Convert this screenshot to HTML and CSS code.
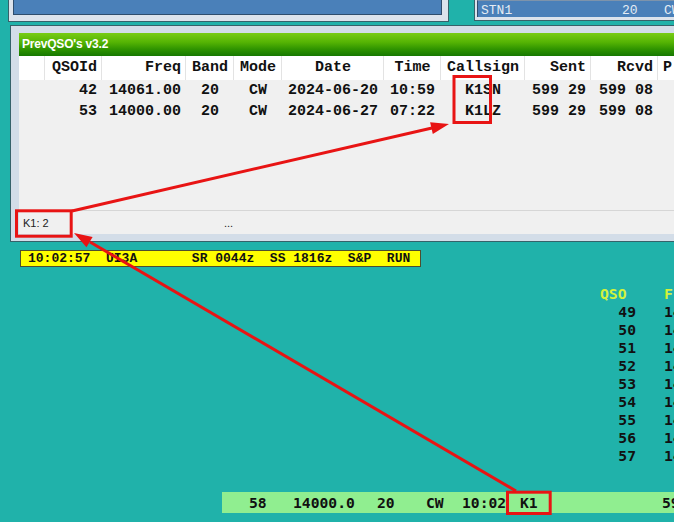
FILE: index.html
```html
<!DOCTYPE html>
<html>
<head>
<meta charset="utf-8">
<link rel="stylesheet" href="styles.css">
</head>
<body>
<div class="top">
  <div class="win-tl"><div class="win-tl-inner"></div></div>
  <div class="win-tr"><div class="win-tr-inner"><span class="tr1">STN1</span><span class="tr2">20</span><span>CW</span></div></div>
</div>
<div class="prev">
  <div class="title">PrevQSO's v3.2</div>
  <div class="content">
    <div class="grid hdr">
      <div class="c"></div>
      <div class="c r">QSOId</div>
      <div class="c r">Freq</div>
      <div class="c m">Band</div>
      <div class="c m">Mode</div>
      <div class="c m">Date</div>
      <div class="c m">Time</div>
      <div class="c m">Callsign</div>
      <div class="c r">Sent</div>
      <div class="c r">Rcvd</div>
      <div class="c l">P</div>
    </div>
    <div class="grid row">
      <div class="c"></div>
      <div class="c r">42</div>
      <div class="c r">14061.00</div>
      <div class="c m">20</div>
      <div class="c m">CW</div>
      <div class="c m">2024-06-20</div>
      <div class="c m">10:59</div>
      <div class="c m">K1SN</div>
      <div class="c r">599 29</div>
      <div class="c r">599 08</div>
      <div class="c l"></div>
    </div>
    <div class="grid row">
      <div class="c"></div>
      <div class="c r">53</div>
      <div class="c r">14000.00</div>
      <div class="c m">20</div>
      <div class="c m">CW</div>
      <div class="c m">2024-06-27</div>
      <div class="c m">07:22</div>
      <div class="c m">K1LZ</div>
      <div class="c r">599 29</div>
      <div class="c r">599 08</div>
      <div class="c l"></div>
    </div>
    <div class="fill"></div>
    <div class="status"><span class="st1">K1: 2</span><span class="st2">...</span></div>
  </div>
</div>
<div class="ybar">10:02:57  UI3A       SR 0044z  SS 1816z  S&amp;P  RUN</div>
<div class="list">
  <div class="lh">QSO</div><div class="lh2">F</div>
  <div class="ln">49</div><div class="lf">14</div>
  <div class="ln">50</div><div class="lf">14</div>
  <div class="ln">51</div><div class="lf">14</div>
  <div class="ln">52</div><div class="lf">14</div>
  <div class="ln">53</div><div class="lf">14</div>
  <div class="ln">54</div><div class="lf">14</div>
  <div class="ln">55</div><div class="lf">14</div>
  <div class="ln">56</div><div class="lf">14</div>
  <div class="ln">57</div><div class="lf">14</div>
</div>
<div class="gbar">
  <span class="g1">58</span><span class="g2">14000.0</span><span class="g3">20</span><span class="g4">CW</span><span class="g5">10:02</span><span class="g6">K1</span><span>599</span>
</div>
<svg class="annot" width="674" height="522" viewBox="0 0 674 522">
  <g fill="none" stroke="#e81414" stroke-width="3">
    <rect x="454" y="76.5" width="36.5" height="46"/>
    <rect x="16.5" y="210.8" width="54.7" height="25.4"/>
    <rect x="507.5" y="492.2" width="42.7" height="21.3"/>
    <line x1="72" y1="211" x2="432" y2="128"/>
    <line x1="516" y1="491" x2="90" y2="242"/>
  </g>
  <g fill="#e81414">
    <polygon points="449,124 432.8,133.9 430.1,122.2"/>
    <polygon points="74,233 92.6,236.9 86.5,247.3"/>
  </g>
</svg>
</body>
</html>
```

FILE: styles.css
```css
html, body {
  margin: 0;
  padding: 0;
}
body {
  width: 674px;
  height: 522px;
  overflow: hidden;
  background: #20b2aa;
  position: relative;
  font-family: "Liberation Mono", "Courier New", monospace;
}

/* top partially visible windows */
.top {
  display: flex;
  align-items: flex-start;
  height: 25px;
  width: 674px;
  overflow: hidden;
}
.win-tl {
  flex-shrink: 0;
  margin-left: 8px;
  width: 441px;
  height: 22px;
  box-sizing: border-box;
  border: 1px solid #36626a;
  border-top: 0;
  background: #dbe3ec;
  padding: 0 6px 6px 4px;
}
.win-tl-inner {
  height: 15px;
  box-sizing: border-box;
  background: #4a80b9;
  border: 1px solid #2e4d6d;
  border-top: 0;
}
.win-tr {
  flex-shrink: 0;
  margin-left: 25px;
  width: 220px;
  height: 21px;
  box-sizing: border-box;
  border: 1px solid #36626a;
  border-top: 0;
  border-right: 0;
  background: #dbe3ec;
  padding: 0 0 3px 2px;
}
.win-tr-inner {
  height: 17px;
  box-sizing: border-box;
  background: #4a80b9;
  border-top: 1px solid #7d93ab;
  border-left: 1px solid #2e4d6d;
  display: flex;
  align-items: flex-end;
  padding-left: 3px;
  color: #e4ecf4;
  font-size: 13px;
  line-height: 12px;
  white-space: pre;
}
.win-tr-inner span { flex-shrink: 0; }
.tr1 { width: 141px; }
.tr2 { width: 42px; }

/* PrevQSO window */
.prev {
  margin-left: 10px;
  width: 700px;
  height: 217px;
  box-sizing: border-box;
  border: 1px solid #36626a;
  border-right: 0;
  background: #d3dde8;
  padding: 7px 0 7px 8px;
  display: flex;
  flex-direction: column;
}
.title {
  height: 23px;
  line-height: 23px;
  padding-left: 3px;
  background: linear-gradient(#78cc14 0%, #55b404 40%, #2f9400 70%, #167800 100%);
  color: #fff;
  font-family: "Liberation Sans", Arial, sans-serif;
  font-weight: bold;
  font-size: 12px;
  letter-spacing: -0.2px;
}
.content {
  flex: 1;
  display: flex;
  flex-direction: column;
  background: #f0f0f0;
}
.grid {
  display: grid;
  grid-template-columns: 26px 57px 84px 48px 48px 102px 57px 84px 66px 67px 40px;
  font-weight: bold;
  font-size: 15px;
  color: #111;
  white-space: pre;
}
.hdr {
  height: 24px;
  line-height: 23px;
  background: #fff;
}
.hdr .c {
  box-shadow: inset -1px 0 0 #e3e3e3;
}
.row {
  height: 21px;
  line-height: 22px;
}
.c { overflow: hidden; }
.r { text-align: right; padding-right: 5px; }
.m { text-align: center; }
.l { text-align: left; padding-left: 5px; }
.fill { flex: 1; }
.status {
  height: 23px;
  border-top: 1px solid #d6d6d6;
  display: flex;
  align-items: center;
  font-family: "Liberation Sans", Arial, sans-serif;
  font-size: 11px;
  color: #222;
}
.st1 { padding-left: 4px; width: 201px; }

/* yellow status line */
.ybar {
  margin: 8px 0 0 20px;
  width: 401px;
  height: 17px;
  box-sizing: border-box;
  background: #ffff00;
  border: 1px solid #4e4e30;
  padding-left: 7px;
  font-weight: bold;
  font-size: 13px;
  line-height: 15px;
  color: #111;
  white-space: pre;
}

/* QSO list */
.list {
  margin: 18px 0 0 600px;
  display: grid;
  grid-template-columns: 36px 28px 40px;
  grid-auto-rows: 18px;
  font-family: "DejaVu Sans Mono", monospace;
  font-weight: bold;
  font-size: 14.7px;
  line-height: 18px;
  color: #111;
}
.lh, .lh2 {
  color: #d2f23c;
}
.lh2 { grid-column: 3; }
.ln { text-align: right; }
.lf { grid-column: 3; }

/* bottom green entry line */
.gbar {
  margin: 27px 0 0 222px;
  width: 480px;
  height: 21px;
  background: #90ee90;
  display: flex;
  align-items: center;
  padding-left: 27px;
  font-family: "DejaVu Sans Mono", monospace;
  font-weight: bold;
  font-size: 14.7px;
  color: #111;
  white-space: pre;
}
.gbar span { flex-shrink: 0; }
.g1 { width: 44px; }
.g2 { width: 84px; }
.g3 { width: 49px; }
.g4 { width: 36px; }
.g5 { width: 58px; }
.g6 { width: 142px; }

.annot {
  position: absolute;
  left: 0;
  top: 0;
  pointer-events: none;
}
```
